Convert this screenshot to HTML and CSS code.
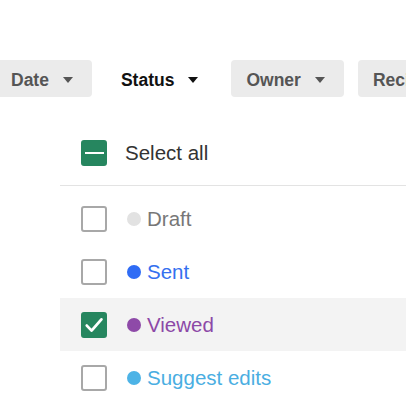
FILE: index.html
```html
<!DOCTYPE html>
<html>
  <head>
    <title>Status filter</title>
    <link rel="stylesheet" href="styles.css">
  </head>
  <body>
    <div class="filters">
      <div class="chip">Date <span class="caret"></span></div>
      <div class="chip active">Status <span class="caret"></span></div>
      <div class="chip">Owner <span class="caret"></span></div>
      <div class="chip">Recipient <span class="caret"></span></div>
    </div>

    <div class="menu">
      <div class="select-all">
        <span class="box partial"></span>
        <span class="label">Select all</span>
      </div>
      <ul class="options">
        <li class="draft">
          <span class="box"></span>
          <span class="dot"></span>Draft
        </li>
        <li class="sent">
          <span class="box"></span>
          <span class="dot"></span>Sent
        </li>
        <li class="viewed checked">
          <span class="box">
            <svg width="26" height="26" viewBox="0 0 26 26">
              <path d="M5.8 13.6 L10.6 18.6 L20.4 7.4" fill="none" stroke="#fff" stroke-width="2.8" stroke-linecap="round" stroke-linejoin="round"/>
            </svg>
          </span>
          <span class="dot"></span>Viewed
        </li>
        <li class="suggest">
          <span class="box"></span>
          <span class="dot"></span>Suggest edits
        </li>
      </ul>
    </div>
  </body>
</html>
```

FILE: styles.css
```css
body {
  margin: 0;
  padding-top: 60px;
  overflow: hidden;
  background: #fff;
  font-family: "Liberation Sans", Arial, sans-serif;
}

.filters {
  display: flex;
  gap: 14px;
  margin-left: -4px;
  white-space: nowrap;
}
.chip {
  flex-shrink: 0;
  display: flex;
  align-items: center;
  gap: 14px;
  box-sizing: border-box;
  height: 37px;
  padding: 3px 19px 0 15px;
  border-radius: 4px;
  background: #ebebeb;
  color: #555;
  font-size: 17.5px;
  font-weight: bold;
}
.chip.active {
  background: none;
  color: #111;
}
.caret {
  width: 0;
  height: 0;
  border-left: 5.5px solid transparent;
  border-right: 5.5px solid transparent;
  border-top: 6px solid currentColor;
}

.menu {
  margin: 23px 0 0 60px;
}
.select-all {
  display: flex;
  align-items: center;
  gap: 18px;
  padding: 20px 0 19px 21px;
  border-bottom: 1px solid #e3e3e3;
  font-size: 20.5px;
  color: #333;
}

.box {
  flex-shrink: 0;
  box-sizing: border-box;
  width: 26px;
  height: 26px;
  border: 2px solid #a8a8a8;
  border-radius: 3px;
  background: #fff;
  position: relative;
}
.box svg {
  position: absolute;
  left: -2px;
  top: -2px;
}
.box.partial,
.checked .box {
  border-color: #26865f;
  background: #26865f;
}
.box.partial::after {
  content: "";
  position: absolute;
  left: 1.5px;
  right: 1.5px;
  top: 10px;
  height: 2px;
  background: #fff;
}

.options {
  list-style: none;
  margin: 0;
  padding: 6px 0 0;
}
.options li {
  display: flex;
  align-items: center;
  height: 53px;
  padding-left: 21px;
  font-size: 20.5px;
}
.options .box {
  margin-right: 20px;
}
.dot {
  width: 14px;
  height: 14px;
  border-radius: 50%;
  margin-right: 6px;
}

.draft { color: #777; }
.draft .dot { background: #e2e2e2; }
.sent { color: #3470ef; }
.sent .dot { background: #2f6cf5; }
.viewed { color: #8c48a7; background: #f3f3f3; }
.viewed .dot { background: #8e4aa8; }
.suggest { color: #4aaee2; }
.suggest .dot { background: #4db3e6; }
```
